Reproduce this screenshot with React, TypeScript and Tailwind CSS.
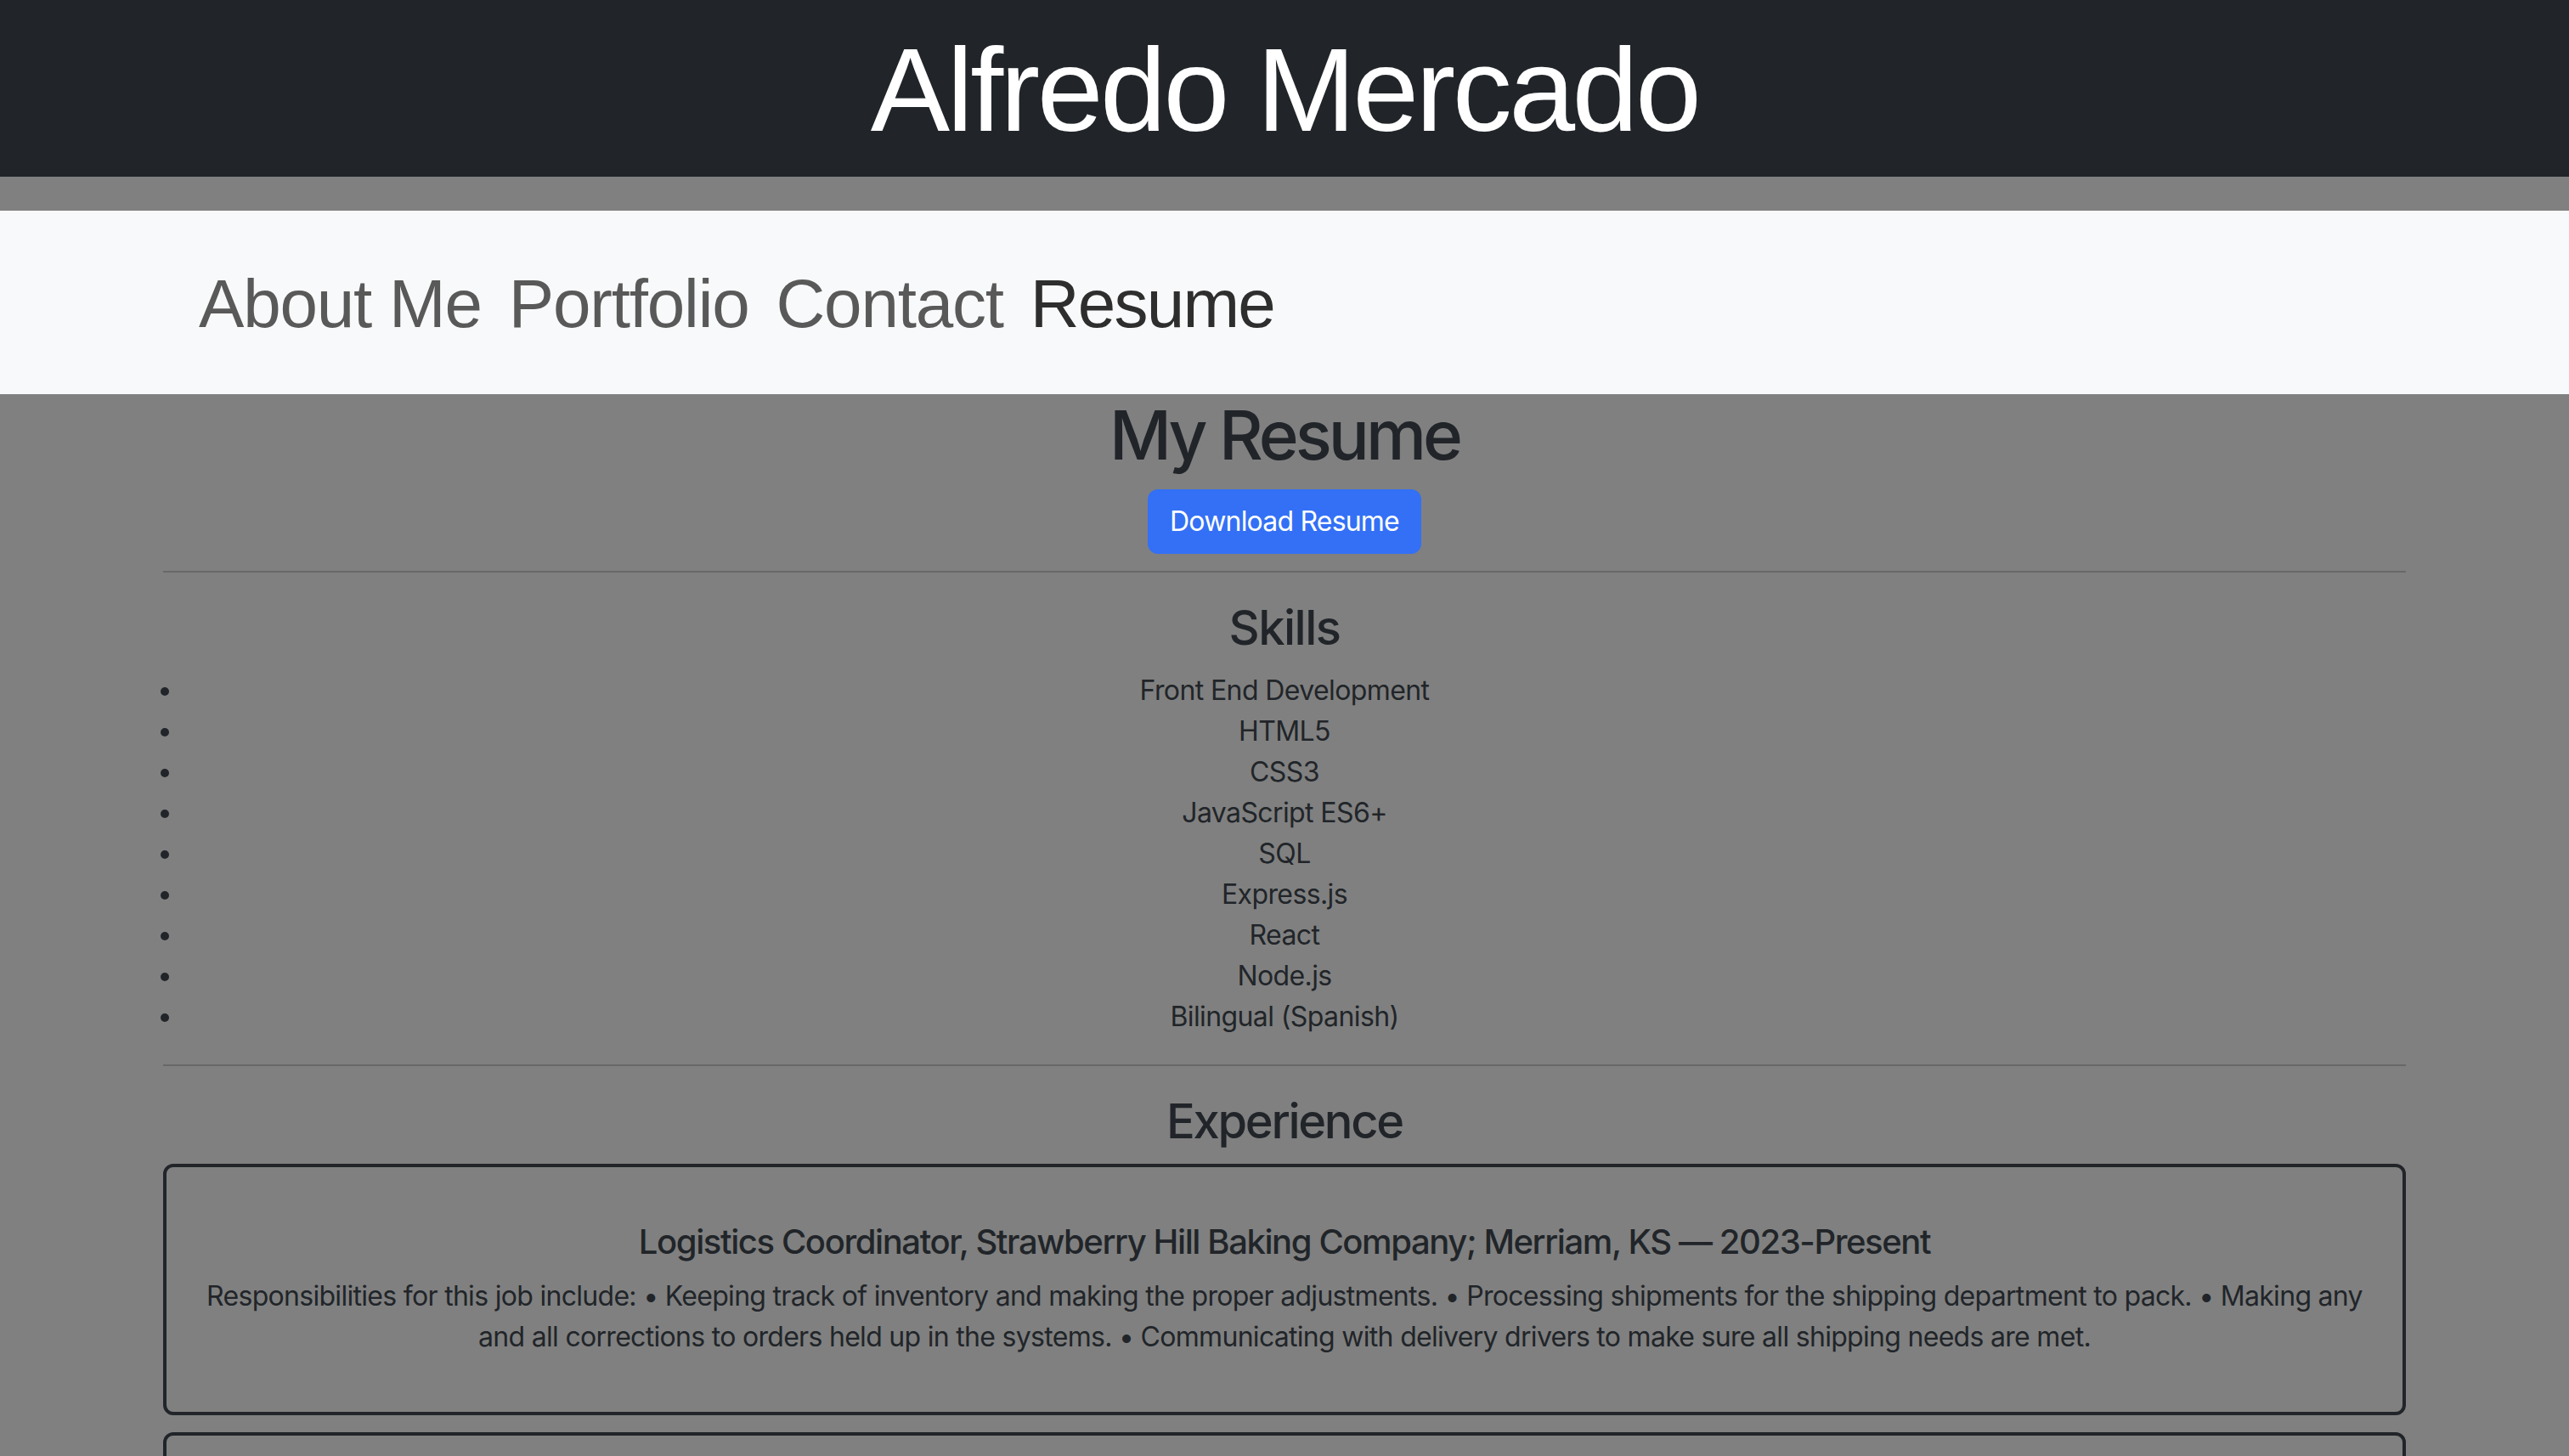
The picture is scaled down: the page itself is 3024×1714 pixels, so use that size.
const skills = [
  'Front End Development',
  'HTML5',
  'CSS3',
  'JavaScript ES6+',
  'SQL',
  'Express.js',
  'React',
  'Node.js',
  'Bilingual (Spanish)',
];

const navLinks = ['About Me', 'Portfolio', 'Contact', 'Resume'];

export default function App() {
  return (
    <div className="min-h-screen bg-[#808080] font-['Inter',sans-serif] text-[#212529]">
      {/* Title bar */}
      <header className="flex h-[208px] items-center justify-center bg-[#212529] pt-[4px]">
        <h1 className="font-['Liberation_Sans',Arial,sans-serif] text-[140px] leading-none tracking-[-3.5px] text-white">
          Alfredo Mercado
        </h1>
      </header>

      {/* Navigation */}
      <nav className="mt-[40px] flex h-[216px] items-center bg-[#f8f9fa] pl-[218px] pt-[4px] font-['Liberation_Sans',Arial,sans-serif]">
        {navLinks.map((link) => (
          <a
            key={link}
            href="#"
            className={
              link === 'Resume'
                ? 'px-[16px] text-[80px] leading-none tracking-[-1.8px] text-[#2e2e2e]'
                : 'px-[16px] text-[80px] leading-none tracking-[-1.2px] text-[#595959]'
            }
          >
            {link}
          </a>
        ))}
      </nav>

      {/* Resume content */}
      <main className="mx-auto w-[2640px]">
        <section className="flex flex-col items-center">
          <h1 className="text-[80px] font-medium leading-[1.2] tracking-[-4px]">My Resume</h1>
          <a
            href="#"
            className="mt-[16px] flex h-[76px] w-[322px] items-center justify-center rounded-[12px] bg-[#3370f5] text-[32px] leading-[48px] tracking-[-0.8px] text-white"
          >
            Download Resume
          </a>
        </section>

        <hr className="mb-[32px] mt-[20px] border-t-2 border-[#686868]" />

        <section>
          <h3 className="mb-[16px] text-center text-[56px] font-medium leading-[1.2] tracking-[-1.5px]">Skills</h3>
          <ul className="mb-[32px] list-disc px-[24px] text-center text-[32px] leading-[48px] tracking-[-0.6px]">
            {skills.map((skill) => (
              <li key={skill}>{skill}</li>
            ))}
          </ul>
        </section>

        <hr className="mb-[32px] border-t-2 border-[#686868]" />

        <section>
          <h3 className="mb-[16px] text-center text-[56px] font-medium leading-[1.2] tracking-[-2.3px]">Experience</h3>

          <div className="mb-[20px] rounded-[12px] border-[4px] border-[#212529] px-[32px] pb-[64px] pt-[64px] text-center">
            <h5 className="mb-[16px] text-[40px] font-medium leading-[48px] tracking-[-1.4px]">
              Logistics Coordinator, Strawberry Hill Baking Company; Merriam, KS — 2023-Present
            </h5>
            <p className="text-[32px] leading-[48px] tracking-[-0.7px]">
              Responsibilities for this job include: • Keeping track of inventory and making the proper adjustments. •
              Processing shipments for the shipping department to pack. • Making any
              <br />
              and all corrections to orders held up in the systems. • Communicating with delivery drivers to make sure
              all shipping needs are met.
            </p>
          </div>

          <div className="mb-[20px] rounded-[12px] border-[4px] border-[#212529] px-[32px] pb-[64px] pt-[64px] text-center">
            <h5 className="mb-[16px] text-[40px] font-medium leading-[48px] tracking-[-1.4px]">
              Shipping Associate, Strawberry Hill Baking Company; Merriam, KS — 2021-2023
            </h5>
            <p className="text-[32px] leading-[48px] tracking-[-0.7px]">
              Responsibilities for this job include: • Packing and labeling orders for delivery. • Loading trucks and
              keeping the warehouse organized.
            </p>
          </div>
        </section>
      </main>
    </div>
  );
}
